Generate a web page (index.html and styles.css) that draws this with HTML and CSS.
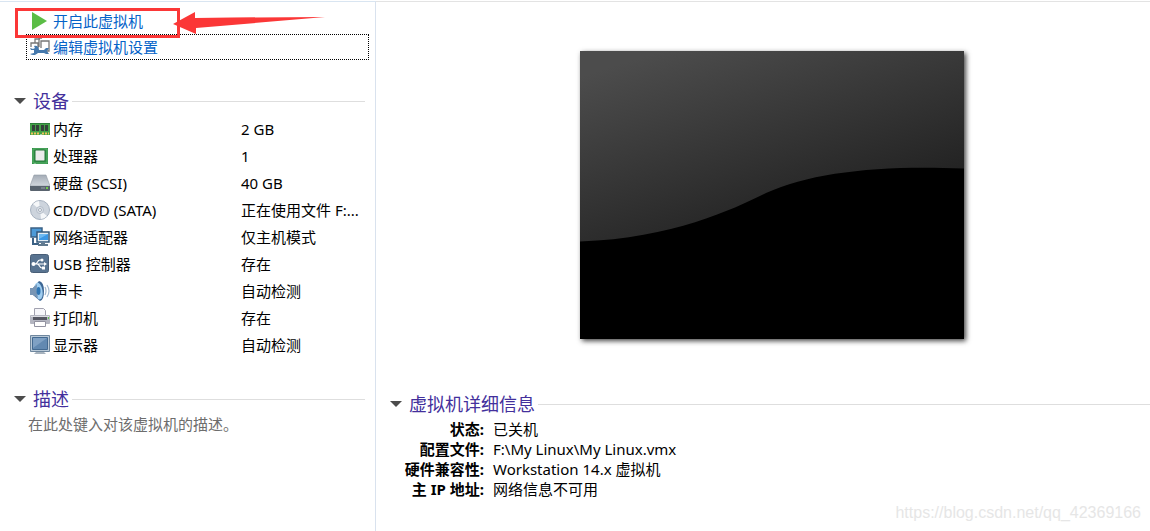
FILE: index.html
```html
<!DOCTYPE html>
<html lang="zh-CN">
<head>
    <meta charset="UTF-8">
    <meta name="viewport" content="width=device-width, initial-scale=1.0">
    <title>My Linux</title>
    <link rel="stylesheet" href="styles.css">
</head>
<body>
    <div class="page">
        <aside class="sidebar">
            <nav class="actions">
                <a href="#" class="action">
                    <svg class="icon" viewBox="0 0 20 20"><path d="M2 1L17 10L2 19z" fill="#5bbd45"/></svg>
                    开启此虚拟机
                </a>
                <a href="#" class="action focused">
                    <svg class="icon" viewBox="0 0 20 20">
                        <path d="M5 6V2h5M1 10V6h7v5M9 10V1h3M11 11V4h8v10h-2" fill="none" stroke="#777" stroke-width="1.300"/>
                        <path d="M0 11l3 1 2-1-1-2c3-1 5 1 5 4h5l2-2h3l-2 3 2 3h-3l-2-1H8c-2 2-5 3-8 1l4-1 0-3-3 0z" fill="#4478ac"/>
                    </svg>
                    编辑虚拟机设置
                </a>
                <div class="highlight"></div>
                <svg class="arrow" viewBox="0 0 154 24"><path d="M1 12L23 0V6L60 5.500L153 5L24 16V22z" fill="#fb3737"/></svg>
            </nav>

            <section class="devices">
                <h2><button type="button" class="heading"><span class="caret"></span>设备</button></h2>
                <table class="device-table">
                    <tr>
                        <th scope="row"><span class="device">
                            <svg class="icon" viewBox="0 0 20 20">
                                <path d="M0 4h20v12h-8l-1-1-1 1H0z" fill="#43a047"/>
                                <path d="M0 4h20v1H0z" fill="#2b7d38"/>
                                <path d="M2 6h3v6H2zM6 6h3v6H6zM11 6h3v6h-3zM15 6h3v6h-3z" fill="#34413a"/>
                                <path d="M1 14.500h9M12 14.500h7" stroke="#efc35b" stroke-width="2" stroke-dasharray="2 1"/>
                            </svg>内存</span></th>
                        <td>2 GB</td>
                    </tr>
                    <tr>
                        <th scope="row"><span class="device">
                            <svg class="icon" viewBox="0 0 20 20">
                                <path d="M2 2h16v16H6l-1-1-1 1H2z" fill="#2f9145"/>
                                <path d="M3 3h14v14H3z" fill="none" stroke="#5db06c"/>
                                <rect x="5" y="4" width="10" height="11" rx="1" fill="#ececec" stroke="#28763a"/>
                            </svg>处理器</span></th>
                        <td>1</td>
                    </tr>
                    <tr>
                        <th scope="row"><span class="device">
                            <svg class="icon" viewBox="0 0 20 20">
                                <defs><linearGradient id="disk" x2="0" y2="1"><stop stop-color="#a4acb6"/><stop offset="1" stop-color="#d2d7dd"/></linearGradient></defs>
                                <path d="M4 2h12l4 11H0z" fill="url(#disk)" stroke="#929ba5" stroke-width=".600"/>
                                <path d="M0 13h20v4q0 1-1 1H1q-1 0-1-1z" fill="#59636e"/>
                                <path d="M11 15h4" stroke="#9aa2aa"/><path d="M16 14h2v2h-2z" fill="#74cb4b"/>
                            </svg>硬盘 (SCSI)</span></th>
                        <td>40 GB</td>
                    </tr>
                    <tr>
                        <th scope="row"><span class="device">
                            <svg class="icon" viewBox="0 0 20 20">
                                <circle cx="10" cy="10" r="9.500" fill="#cdd4dd" stroke="#a7b2c0"/>
                                <path d="M10 10L3 4A9 9 0 0 1 9 1zM10 10L17 16A9 9 0 0 1 11 19z" fill="#f5f7f9"/>
                                <circle cx="10" cy="10" r="3.500" fill="#dfe4ea" stroke="#b4bdc9"/>
                                <circle cx="10" cy="10" r="1.500" fill="#fff" stroke="#a3adba"/>
                            </svg>CD/DVD (SATA)</span></th>
                        <td>正在使用文件 F:...</td>
                    </tr>
                    <tr>
                        <th scope="row"><span class="device">
                            <svg class="icon" viewBox="0 0 20 20">
                                <path d="M1 1h11v9H1z" fill="#4d9bd8" stroke="#3b6185" stroke-width="1.500"/>
                                <path d="M3 11v6h6" fill="none" stroke="#3b6185" stroke-width="2"/>
                                <path d="M7 5h12v10H7z" fill="#e3edf4" stroke="#35587a" stroke-width="1.500"/>
                                <path d="M9 7h9v6H9z" fill="#3c98e5"/><path d="M9 7h9l-9 5z" fill="#6eb9f1"/>
                                <path d="M11 16h4v1h3v2H8v-2h3z" fill="#60798e"/>
                            </svg>网络适配器</span></th>
                        <td>仅主机模式</td>
                    </tr>
                    <tr>
                        <th scope="row"><span class="device">
                            <svg class="icon" viewBox="0 0 20 20">
                                <rect x=".500" y=".500" width="18" height="18" rx="2" fill="#587390" stroke="#485e77"/>
                                <path d="M3 10h11M5 10c3 0 2-4 5-4h2M7 10c3 0 2 4 5 4h2" fill="none" stroke="#fff" stroke-width="1.200"/>
                                <circle cx="3.500" cy="10" r="2" fill="#fff"/><circle cx="12" cy="6" r="1.500" fill="#fff"/>
                                <path d="M14 8l3 2-3 2zM12 12.500h3v3h-3z" fill="#fff"/>
                            </svg>USB 控制器</span></th>
                        <td>存在</td>
                    </tr>
                    <tr>
                        <th scope="row"><span class="device">
                            <svg class="icon" viewBox="0 0 20 20">
                                <path d="M0 7h3l6-7q5 1 5 10t-4 10l-7-6H0z" fill="#3d6795"/>
                                <ellipse cx="8.500" cy="10" rx="4" ry="8.500" fill="#9fcdf0" transform="rotate(-10 8.500 10)"/>
                                <path d="M0 7h3l4-4q-1 7 1 14l-5-3H0z" fill="#7895b4"/>
                                <ellipse cx="8.500" cy="10" rx="2" ry="4" fill="#2f75b3"/>
                                <path d="M15 6q2 4 0 8M17 4q4 6 0 12" fill="none" stroke="#a3b9cf" stroke-width="1.200"/>
                            </svg>声卡</span></th>
                        <td>自动检测</td>
                    </tr>
                    <tr>
                        <th scope="row"><span class="device">
                            <svg class="icon" viewBox="0 0 20 20">
                                <path d="M4.500 .500h9l2 2v7h-11z" fill="#f6f6fa" stroke="#a2a2b0"/>
                                <rect y="7" width="20" height="9" rx="1" fill="#b4b6c1"/>
                                <path d="M1 8h18v1H1z" fill="#dcdde3"/><path d="M3 9h14v3H3z" fill="#555762"/>
                                <path d="M4.500 13.500h11v5h-11z" fill="#fff" stroke="#9292a0"/>
                                <path d="M18 9h1v2h-1z" fill="#5fc648"/>
                            </svg>打印机</span></th>
                        <td>存在</td>
                    </tr>
                    <tr>
                        <th scope="row"><span class="device">
                            <svg class="icon" viewBox="0 0 20 20">
                                <path d="M.500 .500h19v16H.500z" fill="#b9c9d7" stroke="#6f879e"/>
                                <path d="M2.500 2.500h15v12h-15z" fill="#6289b1" stroke="#446a91"/>
                                <path d="M3 3h14L3 13z" fill="#7fa1c4"/>
                                <path d="M6 17h8l2 2H4z" fill="#a6b2bd"/>
                            </svg>显示器</span></th>
                        <td>自动检测</td>
                    </tr>
                </table>
            </section>

            <section class="description">
                <h2><button type="button" class="heading"><span class="caret"></span>描述</button></h2>
                <p>在此处键入对该虚拟机的描述。</p>
            </section>
        </aside>

        <main class="main">
            <div class="preview">
                <svg class="screen" viewBox="0 0 384 288">
                    <defs>
                        <linearGradient id="gloss" gradientUnits="userSpaceOnUse" x1="50" y1="10" x2="115" y2="210">
                            <stop offset="0" stop-color="#4c4c4c"/>
                            <stop offset="1" stop-color="#222"/>
                        </linearGradient>
                    </defs>
                    <rect width="384" height="288" fill="#000"/>
                    <path d="M0 0H384V117.500C300 114 232 121 186 142C155 157 95 187 0 190.500z" fill="url(#gloss)"/>
                </svg>
            </div>

            <section class="details">
                <h2><button type="button" class="heading"><span class="caret"></span>虚拟机详细信息</button></h2>
                <dl>
                    <dt>状态:</dt><dd>已关机</dd>
                    <dt>配置文件:</dt><dd>F:\My Linux\My Linux.vmx</dd>
                    <dt>硬件兼容性:</dt><dd>Workstation 14.x 虚拟机</dd>
                    <dt>主 IP 地址:</dt><dd>网络信息不可用</dd>
                </dl>
            </section>
            <div class="watermark">https://blog.csdn.net/qq_42369166</div>
        </main>
    </div>
</body>
</html>
```
FILE: styles.css
```css
* {
    box-sizing: border-box;
}
body {
    margin: 0;
    background: #fff;
    color: #000;
    font-family: "Noto Sans", "Noto Sans CJK SC", sans-serif;
    font-size: 15px;
    line-height: 20px;
}
h2, p, dl, dd {
    margin: 0;
}
.page {
    display: flex;
    min-height: 100vh;
    padding-top: 1px;
}
.sidebar {
    flex: none;
    width: 376px;
    padding: 6px 6px 0 12px;
    border-top: 1px solid #d9e5f1;
    border-right: 1px solid #d9e2ee;
}
.actions {
    position: relative;
    padding-left: 14px;
    margin-bottom: 29px;
}
.action {
    display: flex;
    align-items: center;
    gap: 3px;
    height: 26px;
    padding-left: 3px;
    border: 1px solid transparent;
    color: #0563c8;
    text-decoration: none;
}
.action.focused {
    border: 1px dotted #000;
}
.icon {
    flex: none;
    width: 20px;
    height: 20px;
}
/* red frame and arrow over the power-on link */
.highlight {
    position: absolute;
    top: 0;
    left: 3px;
    width: 165px;
    height: 30px;
    border: 3px solid #fb3737;
}
.arrow {
    position: absolute;
    top: 4px;
    left: 160px;
    width: 154px;
    height: 24px;
}
.heading {
    display: flex;
    align-items: center;
    width: 100%;
    height: 24px;
    padding: 0;
    border: 0;
    background: none;
    color: #43309c;
    font: inherit;
    font-size: 18px;
    font-weight: normal;
    line-height: 24px;
    white-space: nowrap;
    cursor: pointer;
}
.heading::after {
    content: "";
    flex: 1;
    height: 1px;
    margin-left: 3px;
    background: #dedede;
}
.caret {
    width: 12px;
    height: 6px;
    margin: 0 7px 0 2px;
    background: #4c4c4c;
    clip-path: polygon(0 0, 100% 0, 50% 100%);
}
.devices, .description {
    padding-right: 4px;
}
.device-table {
    width: 100%;
    margin: 2px 0 29px;
    border-collapse: collapse;
    table-layout: fixed;
}
.device-table th, .device-table td {
    height: 27px;
    padding: 0;
    font-weight: normal;
    text-align: left;
    white-space: nowrap;
}
.device-table th {
    width: 229px;
    padding-left: 18px;
}
.device {
    display: flex;
    align-items: center;
    gap: 3px;
}
.description p {
    padding: 3px 0 0 16px;
    color: #6d6d6d;
}
.main {
    display: flex;
    flex: 1;
    flex-direction: column;
    min-width: 0;
    padding-top: 49px;
    border-top: 1px solid #e3e3e3;
}
.preview {
    padding-left: 18px;
}
.screen {
    display: block;
    width: 384px;
    max-width: 90%;
    margin: 0 auto;
    box-shadow: 2px 2px 5px #444;
}
.details {
    padding: 53px 0 0 12px;
}
.details dl {
    display: grid;
    grid-template-columns: 96px 1fr;
    column-gap: 9px;
    padding-top: 3px;
}
.details dt {
    font-weight: bold;
    text-align: right;
}
.watermark {
    margin-top: auto;
    padding: 0 9px 8px 0;
    color: #e6e6e6;
    font-family: "Liberation Sans", Arial, sans-serif;
    font-size: 16px;
    text-align: right;
}
```
